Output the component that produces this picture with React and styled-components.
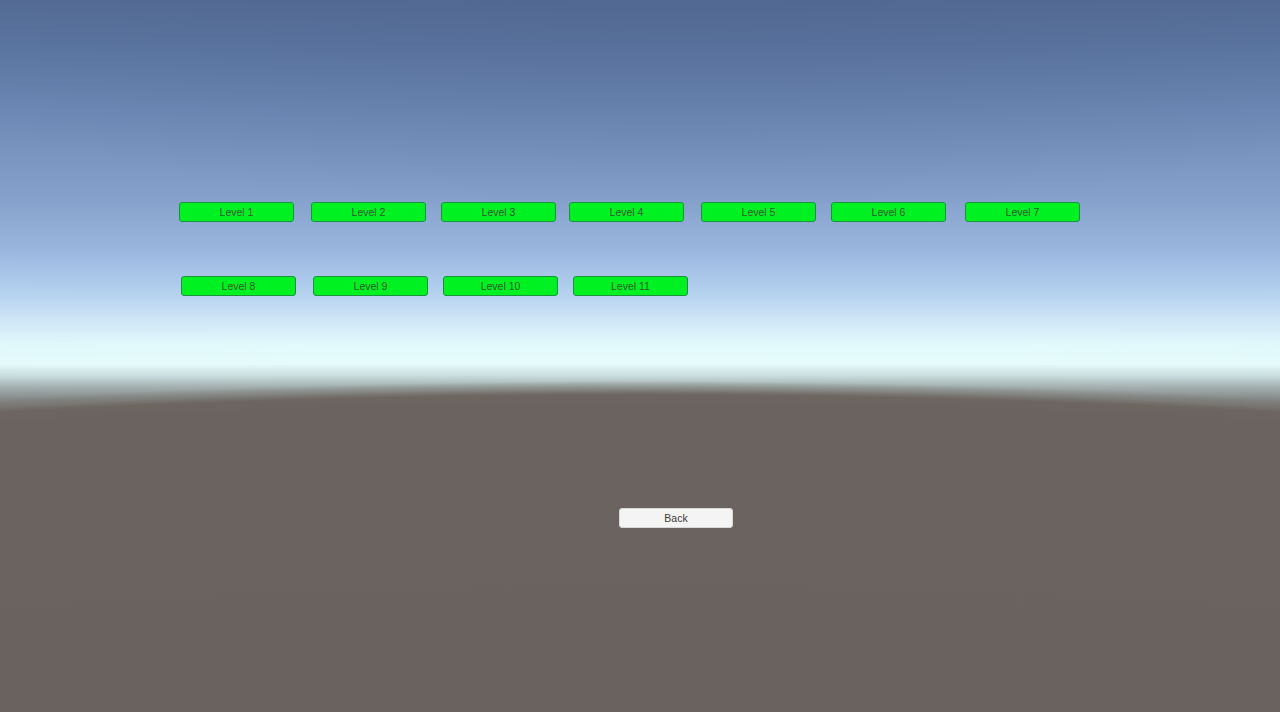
import React from "react";
import styled, { createGlobalStyle } from "styled-components";

const GlobalStyle = createGlobalStyle`
  html, body {
    margin: 0;
    padding: 0;
    height: 100%;
    overflow: hidden;
  }
  body {
    font-family: "Liberation Sans", Arial, sans-serif;
  }
`;

// skybox: ground is one big soft ellipse (curved horizon) over a straight sky/haze gradient
const Scene = styled.div`
  position: relative;
  width: 100vw;
  height: 100vh;
  box-sizing: border-box;
  padding-top: 202px;
  display: flex;
  flex-direction: column;
  background:
    radial-gradient(
      3400px 1000px at 50% 1390px,
      #67605c 0%,
      #6b635f 98.4%,
      #6c6560 99.5%,
      rgba(120, 118, 114, 0.6) 100.1%,
      rgba(140, 150, 148, 0) 100.9%
    ),
    radial-gradient(
      ellipse 900px 260px at 53% -40px,
      rgba(74, 94, 134, 0.35) 0%,
      rgba(74, 94, 134, 0) 100%
    ),
    radial-gradient(
      ellipse 1500px 700px at 52% 0px,
      rgba(255, 255, 255, 0) 55%,
      rgba(190, 215, 245, 0.18) 100%
    ),
    linear-gradient(
      to bottom,
      #546c96 0px,
      #5a74a0 40px,
      #6c88b4 110px,
      #86a2cc 200px,
      #99b6df 250px,
      #b3cfee 290px,
      #cfe6f6 320px,
      #e2fafc 345px,
      #e6fcfc 364px,
      #c8dcdc 376px,
      #9faaa8 388px,
      #858885 398px,
      #716c68 408px,
      #6b635f 416px,
      #67605c 100%
    );
`;

const Row = styled.div`
  display: flex;
  padding-left: ${(props) => props.$left}px;
  margin-top: ${(props) => props.$top || 0}px;
`;

const LevelButton = styled.button`
  box-sizing: border-box;
  width: 115px;
  height: 20px;
  margin-left: ${(props) => props.$gap}px;
  padding: 0;
  background: #00f122;
  border: 1px solid #17963a;
  border-radius: 3px;
  color: #2c5a30;
  font-family: "Liberation Sans", Arial, sans-serif;
  font-size: 10.5px;
  line-height: 18px;
  text-align: center;
  cursor: pointer;
`;

const BackButton = styled.button`
  box-sizing: border-box;
  width: 114px;
  height: 20px;
  padding: 0;
  background: #f4f4f4;
  border: 1px solid #d8d8d8;
  border-radius: 3px;
  color: #3a3a3a;
  font-family: "Liberation Sans", Arial, sans-serif;
  font-size: 10.5px;
  line-height: 18px;
  text-align: center;
  cursor: pointer;
`;

// spacing between the buttons as laid out in the scene
const rowOne = [
  { n: 1, gap: 0 },
  { n: 2, gap: 17 },
  { n: 3, gap: 15 },
  { n: 4, gap: 13 },
  { n: 5, gap: 17 },
  { n: 6, gap: 15 },
  { n: 7, gap: 19 },
];
const rowTwo = [
  { n: 8, gap: 0 },
  { n: 9, gap: 17 },
  { n: 10, gap: 15 },
  { n: 11, gap: 15 },
];

function App() {
  return (
    <>
      <GlobalStyle />
      <Scene>
        <Row $left={179}>
          {rowOne.map((ele) => (
            <LevelButton key={ele.n} $gap={ele.gap}>
              Level {ele.n}
            </LevelButton>
          ))}
        </Row>
        <Row $left={181} $top={54}>
          {rowTwo.map((ele) => (
            <LevelButton key={ele.n} $gap={ele.gap}>
              Level {ele.n}
            </LevelButton>
          ))}
        </Row>
        <Row $left={619} $top={212}>
          <BackButton>Back</BackButton>
        </Row>
      </Scene>
    </>
  );
}

export default App;
